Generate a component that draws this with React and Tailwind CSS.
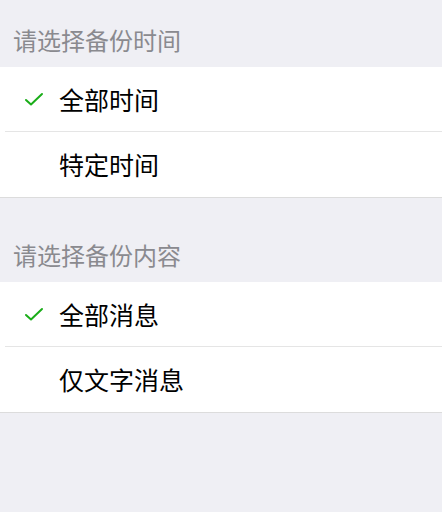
import React from 'react';

const font = { fontFamily: '"Noto Sans CJK SC", "Noto Sans", sans-serif' };

function Check() {
  return (
    <svg width="20" height="15" viewBox="0 0 20 15" className="block">
      <path d="M2 8 L7 12.5 L18 2" fill="none" stroke="#1aad19" strokeWidth="2" strokeLinecap="round" strokeLinejoin="round" />
    </svg>
  );
}

function Row({ label, checked, last }) {
  return (
    <div className="relative flex items-center h-[65px]">
      <div className="w-[59px] flex justify-center pl-[8px]">{checked && <Check />}</div>
      <span className="text-[25px] text-black leading-none">{label}</span>
      {!last && <div className="absolute bottom-0 left-[5px] right-0 h-px bg-[#e5e5e5]" />}
    </div>
  );
}

function Group({ title, items, first }) {
  return (
    <div>
      <div className={`${first ? 'h-[67px]' : 'h-[84px]'} flex items-end pb-[15px] pl-[13px]`}>
        <span className="text-[24px] text-[#8a8a8f] leading-none">{title}</span>
      </div>
      <div className="bg-white border-b border-[#dcdcdc]">
        {items.map((it, i) => (
          <Row key={it.label} {...it} last={i === items.length - 1} />
        ))}
      </div>
    </div>
  );
}

export default function App() {
  return (
    <div className="w-[442px] h-[512px] bg-[#efeff4] overflow-hidden" style={font}>
      <Group first title="请选择备份时间" items={[{ label: '全部时间', checked: true }, { label: '特定时间' }]} />
      <Group title="请选择备份内容" items={[{ label: '全部消息', checked: true }, { label: '仅文字消息' }]} />
    </div>
  );
}
